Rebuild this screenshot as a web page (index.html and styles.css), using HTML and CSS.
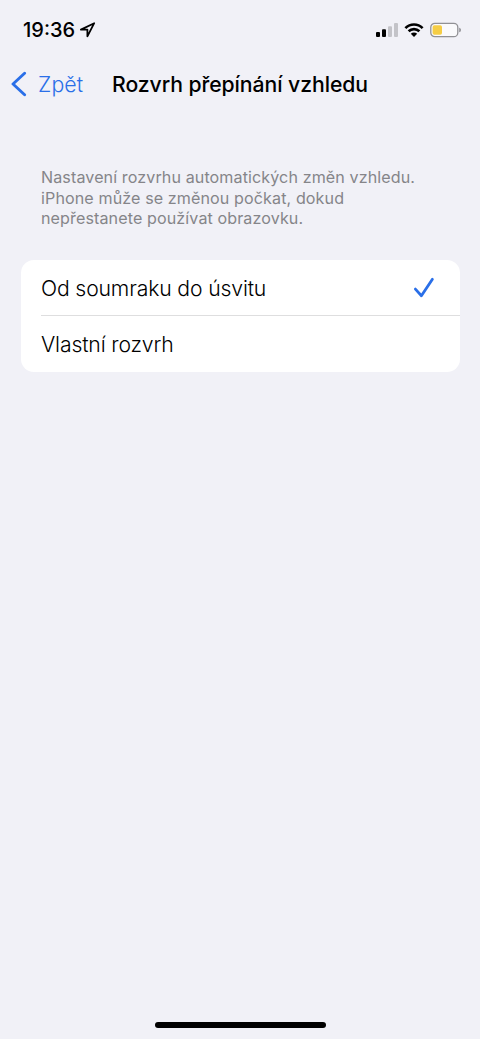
FILE: index.html
```html
<!DOCTYPE html>
<html lang="cs">
<head>
<meta charset="utf-8">
<title>Rozvrh přepínání vzhledu</title>
<link rel="stylesheet" href="styles.css">
</head>
<body>
<div class="screen">
  <header class="status">
    <div class="clock">
      <span class="time">19:36</span>
      <svg class="location" width="18" height="18" viewBox="0 0 18 18"><path d="M15.2 2.2 1.9 8.6H8.4V15.3Z"/></svg>
    </div>
    <div class="indicators">
      <svg class="signal" width="22" height="14" viewBox="0 0 22 14">
        <rect x="0" y="9" width="4" height="5" rx="1"/>
        <rect x="6" y="6.3" width="4" height="7.7" rx="1"/>
        <rect class="off" x="12" y="3.3" width="4" height="10.7" rx="1"/>
        <rect class="off" x="18" y="0" width="4" height="14" rx="1"/>
      </svg>
      <svg class="wifi" width="20" height="14" viewBox="0 0 20 14">
        <path class="arc" d="M1.4 5.1C6.3.3 13.7.3 18.6 5.1M4.6 8.3C7.7 5.4 12.3 5.4 15.4 8.3"/>
        <path d="M6.8 10.8C8.6 9.2 11.4 9.2 13.2 10.8L10 14Z"/>
      </svg>
      <svg class="battery" width="32" height="16" viewBox="0 0 32 16">
        <rect class="shell" x=".8" y="1.3" width="27" height="13.4" rx="4"/>
        <rect class="charge" x="2.6" y="3.2" width="9.4" height="9.6" rx="1.8"/>
        <path class="cap" d="M29.4 5.7C31.2 6.3 31.2 9.7 29.4 10.3Z"/>
      </svg>
    </div>
  </header>
  <nav class="navbar">
    <a class="back">
      <svg width="16" height="26" viewBox="0 0 16 26"><path d="M13.6 2.2 2 13 13.6 23.8"/></svg>
      <span>Zpět</span>
    </a>
    <h1 class="title">Rozvrh přepínání vzhledu</h1>
  </nav>
  <main class="content">
    <p class="note"><span class="line">Nastavení rozvrhu automatických změn vzhledu.</span><span class="line">iPhone může se změnou počkat, dokud</span><span class="line">nepřestanete používat obrazovku.</span></p>
    <ul class="options">
      <li class="option selected">
        <span>Od soumraku do úsvitu</span>
        <svg class="check" width="22" height="22" viewBox="0 0 22 22"><path d="M2.4 12.1 8.4 18.7 19.4 2.3"/></svg>
      </li>
      <li class="option"><span>Vlastní rozvrh</span></li>
    </ul>
  </main>
  <footer class="home"><div class="handle"></div></footer>
</div>
</body>
</html>
```
FILE: styles.css
```css
* { box-sizing: border-box; margin: 0; padding: 0; }
body { background: #f1f1f7; color: #000; font-family: Inter, "Liberation Sans", sans-serif; }
svg { display: block; flex: none; }
.screen { width: 480px; height: 1039px; display: flex; flex-direction: column; overflow: hidden; white-space: nowrap; }
.status { height: 59px; padding: 0 18px 0 23px; display: flex; align-items: center; justify-content: space-between; }
.clock { display: flex; align-items: center; gap: 4px; }
.time { font-size: 20px; font-weight: 500; letter-spacing: 0; line-height: 24px; }
.location { fill: none; stroke: #000; stroke-width: 1.8; stroke-linejoin: round; }
.indicators { display: flex; align-items: center; gap: 7px; }
.signal { margin-right: -1px; }
.signal .off { fill: #c3c3c8; }
.arc { fill: none; stroke: #000; stroke-width: 2.7; }
.battery { margin-left: -1px; }
.shell { fill: #fafafc; stroke: #919195; stroke-width: 1.3; }
.charge { fill: #f5cd45; }
.cap { fill: #77777b; }
.navbar { height: 50px; padding-left: 11px; display: flex; align-items: center; }
.back { width: 101px; display: flex; align-items: center; gap: 11px; color: #2a6fe8; font-size: 21.3px; font-weight: 300; letter-spacing: .15px; }
.back path { fill: none; stroke: #2a6fe8; stroke-width: 2.9; stroke-linecap: round; stroke-linejoin: round; }
.title { font-size: 21.2px; font-weight: 500; letter-spacing: -.06px; }
.content { flex: 1; padding: 58px 20.5px 0; }
.note { padding-left: 20.5px; color: #858589; font-size: 16.1px; letter-spacing: .1px; line-height: 20.6px; }
.line { display: block; }
.options { list-style: none; margin-top: 31px; border-radius: 13px; background: #fff; overflow: hidden; }
.option { height: 56px; margin-left: 20.5px; padding-right: 24.5px; display: flex; align-items: center; justify-content: space-between; font-size: 21.2px; font-weight: 300; letter-spacing: -.15px; }
.option.selected { padding-top: 2px; border-bottom: 1px solid #dededf; }
.check path { fill: none; stroke: #2a6fe8; stroke-width: 2.8; stroke-linecap: round; stroke-linejoin: round; }
.home { height: 17px; display: flex; justify-content: center; }
.handle { width: 171px; height: 6px; border-radius: 3px; background: #000; }
```
